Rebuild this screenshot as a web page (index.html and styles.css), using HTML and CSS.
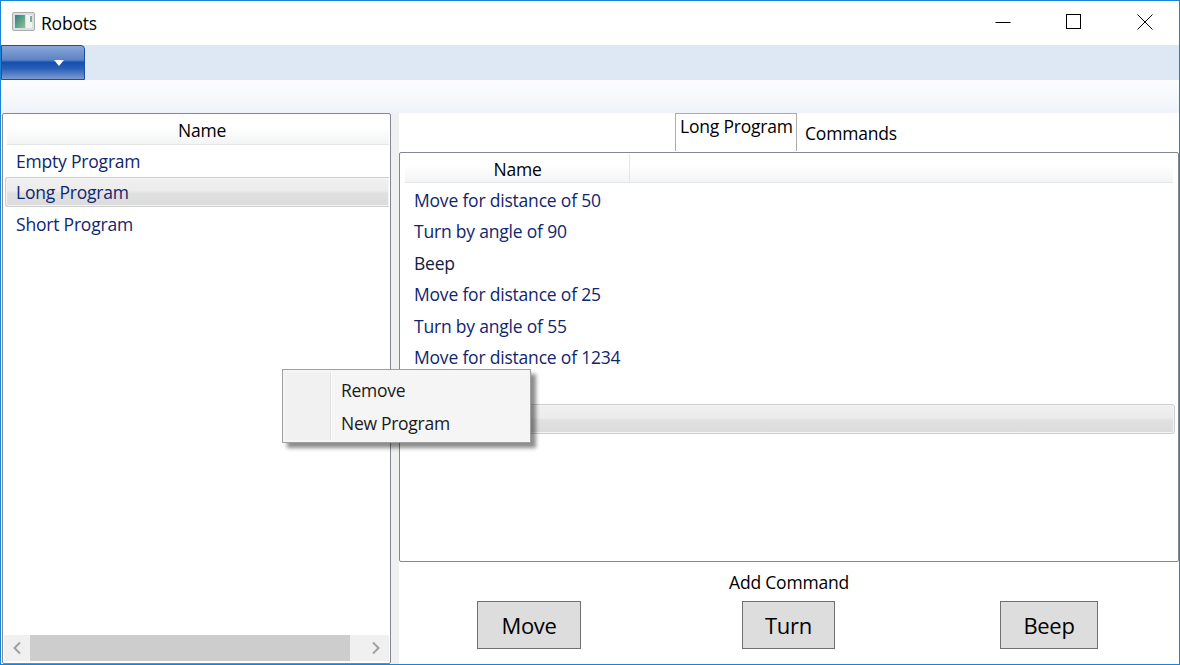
FILE: index.html
```html
<!DOCTYPE html>
<html lang="en">
<head>
<meta charset="utf-8">
<title>Robots</title>
<link rel="stylesheet" href="styles.css">
</head>
<body>
<div class="window">
  <header class="titlebar">
    <svg class="app-icon" width="24" height="20" viewBox="0 0 24 20">
      <defs>
        <linearGradient id="pane" x1="0" y1="0" x2="1" y2="1">
          <stop offset="0" stop-color="#2f7f86"/>
          <stop offset="1" stop-color="#8fc28c"/>
        </linearGradient>
      </defs>
      <rect x="0.5" y="0.5" width="22" height="18" rx="1.5" fill="#dcdfdf" stroke="#a9adad"/>
      <rect x="3" y="3" width="10" height="13" fill="url(#pane)"/>
      <rect x="14" y="3" width="6" height="13" fill="#f1f3f1"/>
      <rect x="18" y="4" width="2" height="6" fill="#7fa8a0"/>
    </svg>
    <span class="app-title">Robots</span>
    <div class="caption">
      <svg class="cap-btn" width="16" height="16" viewBox="0 0 16 16"><path d="M0.5 8.5H15.5" stroke="#000" fill="none"/></svg>
      <svg class="cap-btn" width="16" height="16" viewBox="0 0 16 16"><rect x="0.5" y="0.5" width="14" height="14" stroke="#000" fill="none"/></svg>
      <svg class="cap-btn" width="16" height="16" viewBox="0 0 16 16"><path d="M0.5 0.5L15.5 15.5M15.5 0.5L0.5 15.5" stroke="#000" fill="none"/></svg>
    </div>
  </header>
  <div class="ribbon-tabs">
    <div class="app-menu"><span class="app-menu-arrow"></span></div>
  </div>
  <div class="ribbon-body"></div>
  <main class="content">
    <section class="programs">
      <div class="list-head list-head-full">Name</div>
      <ul class="list">
        <li class="row">Empty Program</li>
        <li class="row row-selected">Long Program</li>
        <li class="row">Short Program</li>
      </ul>
      <div class="hscroll">
        <div class="hscroll-btn">
          <svg width="12" height="14" viewBox="0 0 12 14"><path d="M9 1.5L3.5 7L9 12.5" stroke="#a0a0a0" stroke-width="2" fill="none"/></svg>
        </div>
        <div class="hscroll-thumb"></div>
        <div class="hscroll-track"></div>
        <div class="hscroll-btn">
          <svg width="12" height="14" viewBox="0 0 12 14"><path d="M3 1.5L8.5 7L3 12.5" stroke="#a0a0a0" stroke-width="2" fill="none"/></svg>
        </div>
      </div>
    </section>
    <div class="gutter"></div>
    <section class="detail">
      <div class="tabs">
        <div class="tab-active">Long Program</div>
        <div class="tab-label">Commands</div>
      </div>
      <div class="commands">
        <div class="cmd-head">
          <div class="cmd-head-name">Name</div>
          <div class="cmd-head-rest"></div>
        </div>
        <ul class="list cmd-list">
          <li class="row">Move for distance of 50</li>
          <li class="row">Turn by angle of 90</li>
          <li class="row row-dark">Beep</li>
          <li class="row">Move for distance of 25</li>
          <li class="row">Turn by angle of 55</li>
          <li class="row">Move for distance of 1234</li>
          <li class="row"></li>
          <li class="row row-selected"></li>
        </ul>
      </div>
      <div class="add-title">Add Command</div>
      <div class="add-buttons">
        <button class="cmd-btn btn-move">Move</button>
        <button class="cmd-btn btn-turn">Turn</button>
        <button class="cmd-btn btn-beep">Beep</button>
      </div>
    </section>
  </main>
  <div class="context-menu">
    <div class="menu-item">Remove</div>
    <div class="menu-item">New Program</div>
  </div>
</div>
</body>
</html>
```
FILE: styles.css
```css
* { box-sizing: border-box; }
html, body { margin: 0; padding: 0; }
body {
  width: 1180px;
  height: 665px;
  overflow: hidden;
  font-family: "Open Sans", "Noto Sans", sans-serif;
  font-size: 17.5px;
  letter-spacing: -0.2px;
  color: #000;
  background: #fff;
}
.window {
  position: relative;
  width: 1180px;
  height: 665px;
  display: flex;
  flex-direction: column;
  border: 1px solid #1883d7;
}
.titlebar {
  height: 44px;
  display: flex;
  align-items: center;
  padding: 0 0 0 11px;
  background: #fff;
  flex: none;
}
.app-icon { flex: none; margin-top: -3px; }
.app-title { margin-left: 5px; }
.caption { margin-left: auto; display: flex; gap: 55px; padding-right: 26px; margin-top: -2px; }
.cap-btn { display: block; }
.ribbon-tabs {
  height: 35px;
  flex: none;
  background: #dee8f4;
}
.app-menu {
  width: 84px;
  height: 35px;
  border: 1px solid #1c4fa3;
  border-radius: 0 4px 0 0;
  background: linear-gradient(#8aa8d8 0, #5c83c4 42%, #134eb0 50%, #2a5fb6 68%, #7a9bd0 100%);
  display: flex;
  justify-content: center;
  padding-left: 32px;
  padding-top: 14px;
}
.app-menu-arrow {
  width: 0;
  height: 0;
  border-left: 5px solid transparent;
  border-right: 5px solid transparent;
  border-top: 6px solid #fff;
}
.ribbon-body {
  height: 33px;
  flex: none;
  background: linear-gradient(#fdfdfe, #eff3f9);
}
.content {
  flex: 1;
  min-height: 0;
  display: flex;
  background: #fff;
}
.programs {
  width: 389px;
  margin-left: 1px;
  flex: none;
  display: flex;
  flex-direction: column;
  border: 1px solid #828790;
  border-radius: 2px;
  padding: 1px 1px 2px 1px;
  background: #fff;
}
.gutter { width: 8px; flex: none; background: #f0f0f3; }
.list-head {
  text-align: center;
  line-height: 31px;
  height: 30px;
  flex: none;
  background: linear-gradient(#fff 40%, #f3f4f5);
  border-bottom: 1px solid #e4e6e8;
}
.list-head-full { margin-left: 3px; padding-left: 8px; }
.list {
  list-style: none;
  margin: 0;
  padding: 0 0 0 1px;
  flex: 1;
  min-height: 0;
}
.row {
  height: 31.5px;
  line-height: 30px;
  padding-left: 10px;
  color: #10266e;
  white-space: nowrap;
  border: 1px solid transparent;
}
.row-dark { color: #122040; }
.row-selected {
  height: 30px;
  margin-bottom: 1.5px;
  line-height: 28px;
  background: linear-gradient(#f0f0f0 0, #ececec 45%, #e0e0e0 55%, #dcdcdc 100%);
  border: 1px solid #cdcdcd;
  border-radius: 3px;
  box-shadow: inset 0 0 0 1px #f5f5f5;
}
.programs .row-selected { border-right: none; border-radius: 3px 0 0 3px; }
.hscroll {
  height: 26px;
  flex: none;
  display: flex;
  background: #f0f0f0;
}
.hscroll-btn {
  width: 26px;
  flex: none;
  display: flex;
  align-items: center;
  justify-content: center;
}
.hscroll-thumb { width: 320px; flex: none; background: #cdcdcd; }
.hscroll-track { flex: 1; }
.detail {
  flex: 1;
  min-width: 0;
  display: flex;
  flex-direction: column;
}
.tabs {
  height: 39px;
  flex: none;
  display: flex;
  padding-left: 276px;
}
.tab-active {
  width: 122px;
  height: 38px;
  border: 1px solid #acacac;
  border-bottom: none;
  line-height: 24px;
  padding-left: 4px;
  white-space: nowrap;
  background: #fff;
}
.tab-label {
  line-height: 40px;
  margin-left: 8px;
  white-space: nowrap;
}
.commands {
  height: 410px;
  flex: none;
  border: 1px solid #828790;
  border-radius: 2px;
  padding: 1px 5px 1px 5px;
  display: flex;
  flex-direction: column;
  background: #fff;
}
.cmd-head {
  display: flex;
  height: 29px;
  flex: none;
  background: linear-gradient(#fff 40%, #f3f4f5);
  border-bottom: 1px solid #e4e6e8;
}
.cmd-head-name {
  width: 225px;
  padding-left: 1px;
  text-align: center;
  line-height: 30px;
  border-right: 1px solid #e4e6e8;
}
.cmd-head-rest { flex: 1; }
.cmd-list { padding: 0.5px 0 0 0; margin-right: -2px; }
.cmd-list .row { padding-left: 8px; }
.add-title {
  height: 30px;
  flex: none;
  text-align: center;
  line-height: 40px;
}
.add-buttons {
  flex: 1;
  display: flex;
  padding: 9px 0 0 78px;
}
.cmd-btn {
  height: 48px;
  border: 1px solid #707070;
  background: #dddddd;
  font-family: inherit;
  font-size: 22px;
  letter-spacing: -0.3px;
  color: #000;
  padding: 0;
}
.btn-move { width: 104px; }
.btn-turn { width: 93px; margin-left: 161px; }
.btn-beep { width: 98px; margin-left: 165px; }
.context-menu {
  position: absolute;
  left: 281px;
  top: 368px;
  width: 249px;
  height: 74px;
  border: 1px solid #a0a0a0;
  background: #f5f5f5;
  padding: 4px 0 0 0;
  box-shadow: 5px 5px 4px rgba(0, 0, 0, 0.45);
}
.context-menu::before {
  content: "";
  position: absolute;
  left: 2px;
  top: 2px;
  bottom: 2px;
  width: 45px;
  background: #f1f1f1;
  border-right: 1px solid #e2e2e2;
  box-shadow: 1px 0 0 #fff;
}
.menu-item {
  position: relative;
  height: 33px;
  line-height: 33px;
  padding-left: 58px;
  letter-spacing: -0.28px;
  color: #1a1a1a;
}
```
